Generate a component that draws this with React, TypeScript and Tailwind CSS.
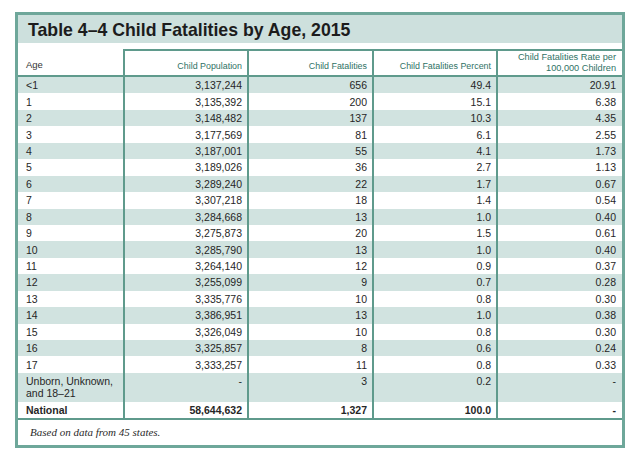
import React from "react";

const rows: [string, string, string, string, string][] = [
  ["<1", "3,137,244", "656", "49.4", "20.91"],
  ["1", "3,135,392", "200", "15.1", "6.38"],
  ["2", "3,148,482", "137", "10.3", "4.35"],
  ["3", "3,177,569", "81", "6.1", "2.55"],
  ["4", "3,187,001", "55", "4.1", "1.73"],
  ["5", "3,189,026", "36", "2.7", "1.13"],
  ["6", "3,289,240", "22", "1.7", "0.67"],
  ["7", "3,307,218", "18", "1.4", "0.54"],
  ["8", "3,284,668", "13", "1.0", "0.40"],
  ["9", "3,275,873", "20", "1.5", "0.61"],
  ["10", "3,285,790", "13", "1.0", "0.40"],
  ["11", "3,264,140", "12", "0.9", "0.37"],
  ["12", "3,255,099", "9", "0.7", "0.28"],
  ["13", "3,335,776", "10", "0.8", "0.30"],
  ["14", "3,386,951", "13", "1.0", "0.38"],
  ["15", "3,326,049", "10", "0.8", "0.30"],
  ["16", "3,325,857", "8", "0.6", "0.24"],
  ["17", "3,333,257", "11", "0.8", "0.33"],
];

const line = "border-[#5f9a8c]";

function Row({ cells, shaded, tall, bold }: { cells: string[]; shaded: boolean; tall?: boolean; bold?: boolean }) {
  const bg = shaded ? "bg-[#d1e3e0]" : "bg-white";
  const h = tall ? "h-[29px]" : "h-[16.44px]";
  const fw = bold ? "font-bold" : "";
  return (
    <div className={`flex ${bg} ${h} ${fw} text-[10.5px] leading-[12px] text-[#262626]`}>
      <div className={`w-[107px] border-r-2 ${line} pl-[8px] flex items-center`}>
        <span className="whitespace-pre-line">{cells[0]}</span>
      </div>
      <div className={`w-[124px] border-r-2 ${line} pr-[5px] flex ${tall ? "items-start pt-[2px]" : "items-center"} justify-end`}>{cells[1]}</div>
      <div className={`w-[125px] border-r-2 ${line} pr-[5px] flex ${tall ? "items-start pt-[2px]" : "items-center"} justify-end`}>{cells[2]}</div>
      <div className={`w-[124px] border-r-2 ${line} pr-[5px] flex ${tall ? "items-start pt-[2px]" : "items-center"} justify-end`}>{cells[3]}</div>
      <div className={`w-[124px] pr-[6px] flex ${tall ? "items-start pt-[2px]" : "items-center"} justify-end`}>{cells[4]}</div>
    </div>
  );
}

export default function App() {
  return (
    <div className="w-[634px] h-[451px] bg-white pt-[12px] pl-[15px]" style={{ fontFamily: '"Liberation Sans", Arial, sans-serif' }}>
      <div className="w-[610px] h-[436px] border-[3px] border-[#6ea79a] flex flex-col">
        <div className="h-[28px] bg-[#cde0dd] pl-[10px] flex items-center pt-[3px]">
          <span className="text-[17.7px] font-bold text-[#1c1c1c] leading-none">Table 4–4 Child Fatalities by Age, 2015</span>
        </div>
        <div className="h-[6px] bg-white" />
        <div className={`flex h-[28px] border-b-2 ${line}`}>
          <div className={`w-[107px] border-r-2 ${line} pl-[8px] flex items-end pb-[3px] text-[9.5px] text-[#333]`}>Age</div>
          <div className={`w-[124px] border-r-2 border-t-2 ${line} pr-[5px] flex items-end justify-end pb-[3px] text-[8.9px] leading-[11px] text-[#2f7265]`}>Child Population</div>
          <div className={`w-[125px] border-r-2 border-t-2 ${line} pr-[5px] flex items-end justify-end pb-[3px] text-[8.9px] leading-[11px] text-[#2f7265]`}>Child Fatalities</div>
          <div className={`w-[124px] border-r-2 border-t-2 ${line} pr-[5px] flex items-end justify-end pb-[3px] text-[8.9px] leading-[11px] text-[#2f7265]`}>Child Fatalities Percent</div>
          <div className={`w-[124px] border-t-2 ${line} pr-[6px] flex items-end justify-end pb-[2px] text-[9.2px] leading-[10.5px] text-[#2f7265] text-right`}>
            <span>Child Fatalities Rate per<br />100,000 Children</span>
          </div>
        </div>
        {rows.map((r, i) => (
          <Row key={i} cells={r} shaded={i % 2 === 0} />
        ))}
        <Row cells={["Unborn, Unknown,\nand 18–21", "-", "3", "0.2", "-"]} shaded tall />
        <div className={`border-b-2 ${line}`}>
          <Row cells={["National", "58,644,632", "1,327", "100.0", "-"]} shaded={false} bold />
        </div>
        <div className="flex-1 flex items-center pl-[12px]">
          <span className="italic text-[11px] text-[#2a2a2a]" style={{ fontFamily: '"Liberation Serif", "Times New Roman", serif' }}>Based on data from 45 states.</span>
        </div>
      </div>
    </div>
  );
}
